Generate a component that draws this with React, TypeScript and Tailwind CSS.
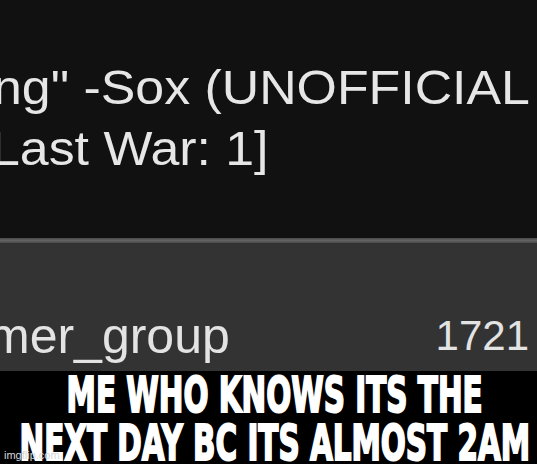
export default function App() {
  return (
    <div className="relative w-[537px] h-[464px] overflow-hidden bg-black">
      {/* message body */}
      <div className="h-[238px] bg-[#111111] overflow-hidden pt-[57px] font-['Liberation_Sans',Arial,sans-serif] text-[#e6e6e6] text-[48px] leading-[61px] whitespace-nowrap">
        <div className="-ml-[7px] origin-left scale-x-[1.08]">ng&quot; -Sox (UNOFFICIAL</div>
        <div className="-ml-[9px] origin-left scale-x-[1.08]">Last War: 1]</div>
      </div>
      {/* divider */}
      <div className="h-[5px] bg-gradient-to-b from-[#4a4a4a] via-[#626262] to-[#4a4a4a]" />
      {/* member row */}
      <div className="h-[128px] bg-[#333333] overflow-hidden flex items-start justify-between pr-[8px] font-['Liberation_Sans',Arial,sans-serif] text-[#e3e3e3] whitespace-nowrap">
        <span className="mt-[68px] -ml-[12px] text-[50px] leading-[50px]">mer_group</span>
        <span className="mt-[72px] text-[42px] leading-[42px]">1721</span>
      </div>
      {/* caption */}
      <div className="h-[93px] bg-black flex flex-col items-center pl-[13px] font-['DejaVu_Sans',sans-serif] font-bold text-white uppercase text-[50px] leading-[48px] [font-stretch:condensed] [-webkit-text-stroke:2px_#ffffff] whitespace-nowrap">
        <div className="scale-x-[0.655] origin-center">ME WHO KNOWS ITS THE</div>
        <div className="scale-x-[0.655] origin-center">NEXT DAY BC ITS ALMOST 2AM</div>
      </div>
      <span className="absolute left-[4px] bottom-[2px] text-[11px] leading-[13px] text-[#d8d8d8] font-['Liberation_Sans',Arial,sans-serif]">
        imgflip.com
      </span>
    </div>
  );
}
